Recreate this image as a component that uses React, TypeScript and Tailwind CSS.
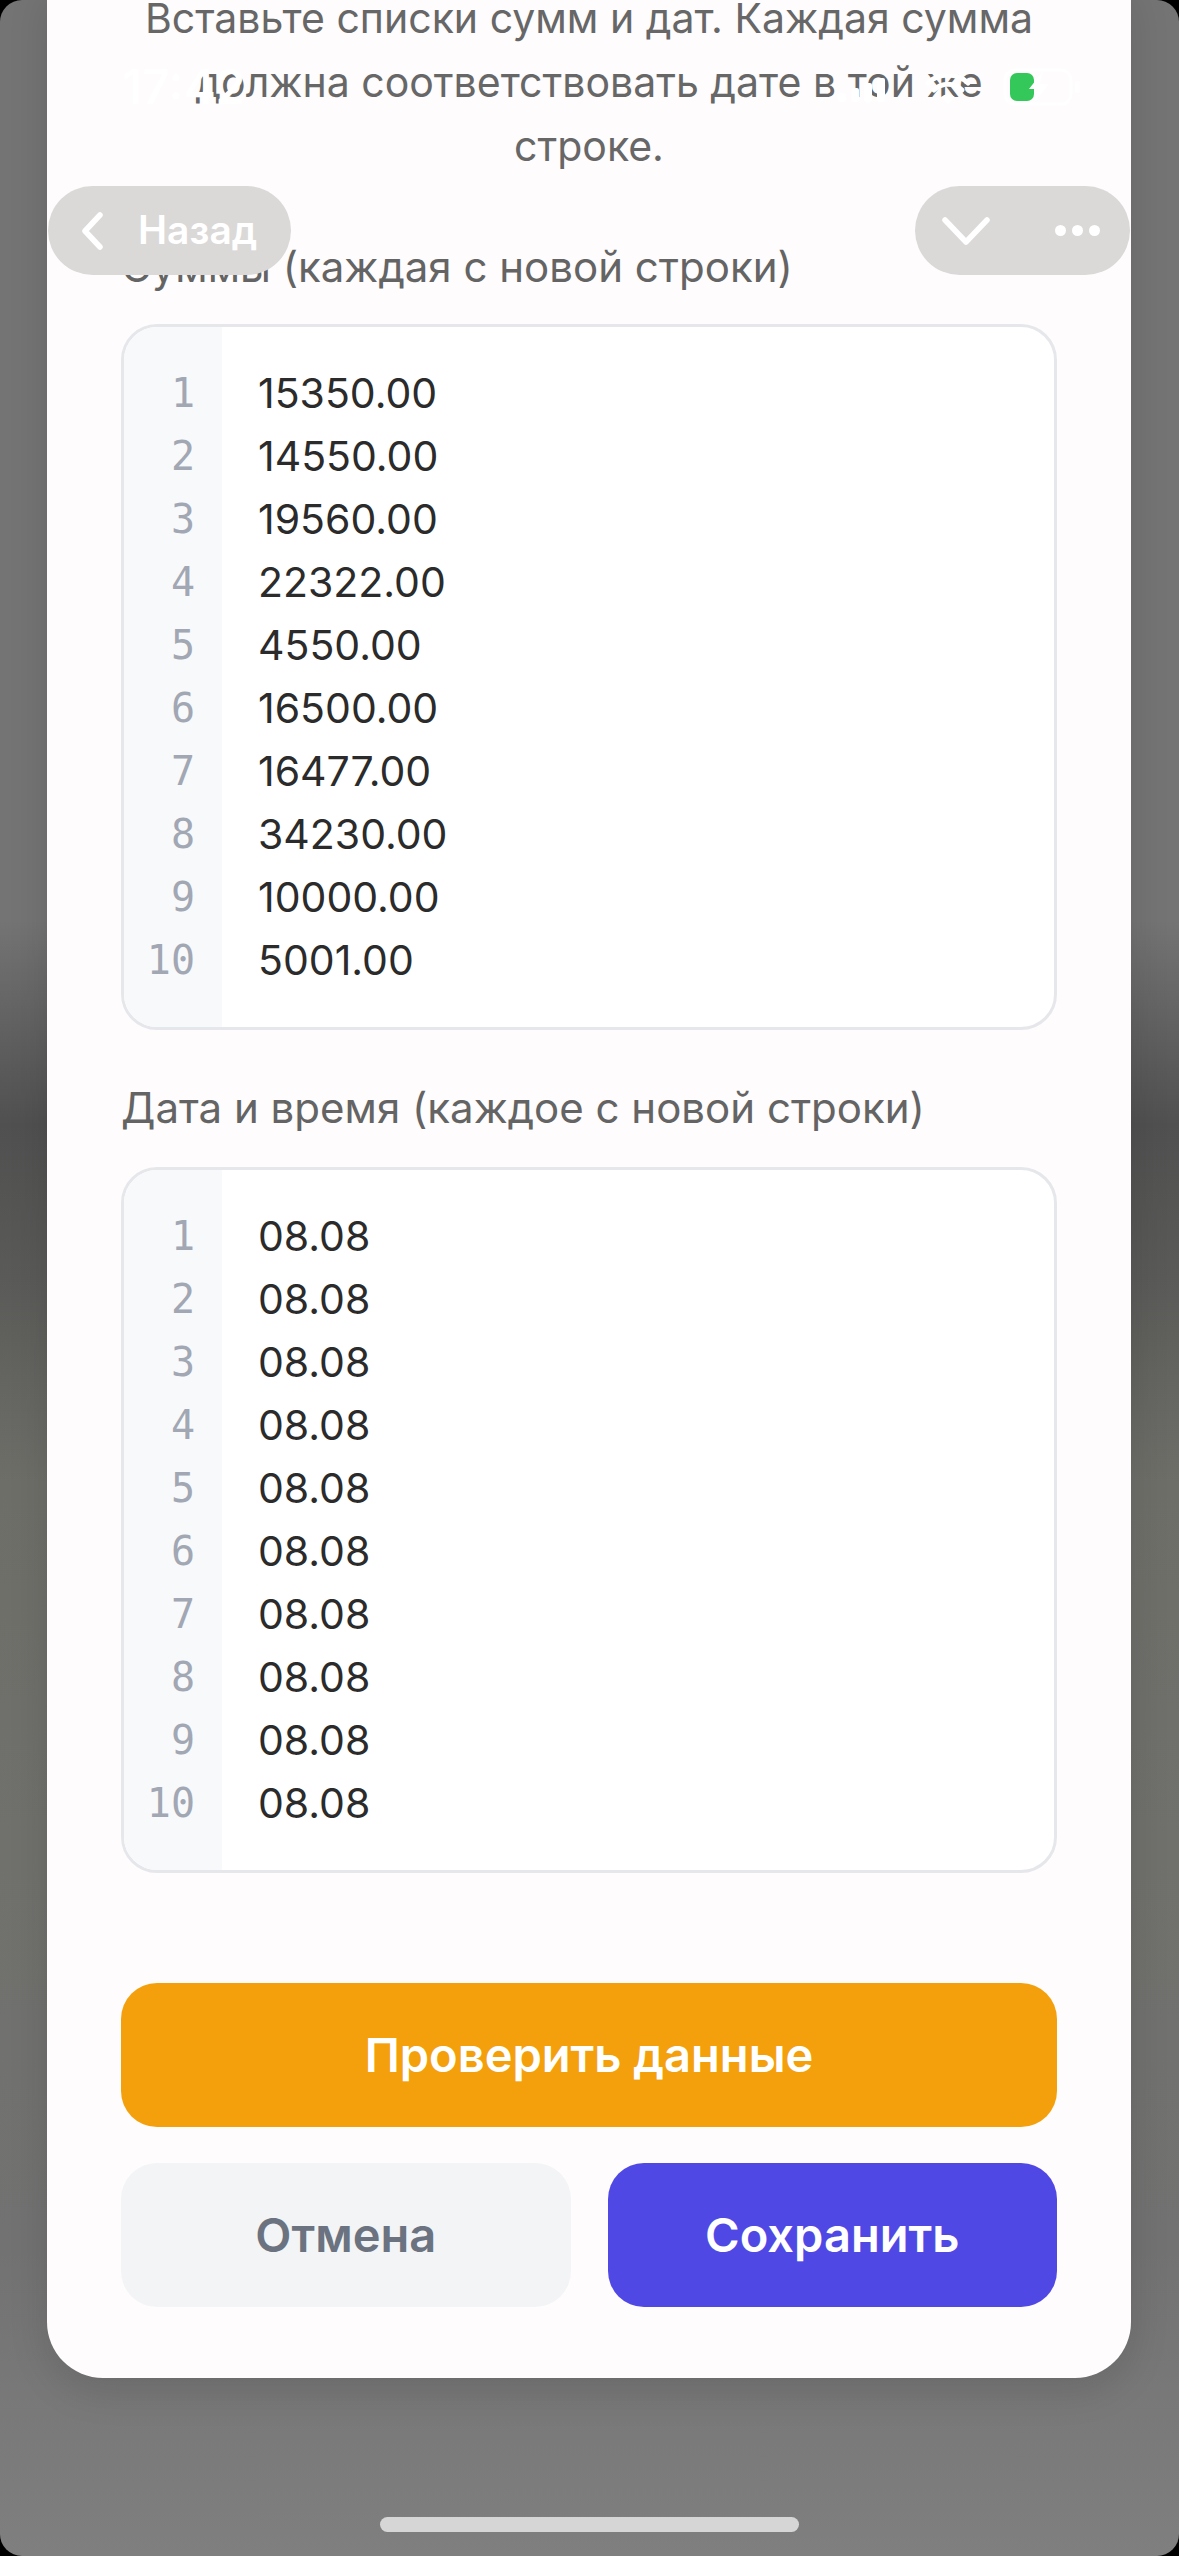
import React from "react";

const sums = [
  "15350.00",
  "14550.00",
  "19560.00",
  "22322.00",
  "4550.00",
  "16500.00",
  "16477.00",
  "34230.00",
  "10000.00",
  "5001.00",
];
const dates = Array.from({ length: 10 }, () => "08.08");

function Editor({ lines }: { lines: string[] }) {
  return (
    <div className="flex overflow-hidden rounded-[36px] border-[3px] border-[#e6e7eb] bg-white">
      <div className="w-[98px] shrink-0 bg-[#f8f9fb] py-[35px] pr-[27px] text-right font-['DejaVu_Sans_Mono',monospace] text-[40px] leading-[63px] text-[#a1a7b3]">
        {lines.map((_, i) => (
          <div key={i}>{i + 1}</div>
        ))}
      </div>
      <div className="flex-1 py-[35px] pl-[36px] text-[41px] leading-[63px] text-[#2b2b2b]">
        {lines.map((l, i) => (
          <div key={i}>{l}</div>
        ))}
      </div>
    </div>
  );
}

export default function App() {
  return (
    <div className="relative h-[2556px] w-[1179px] overflow-hidden bg-black font-['Inter','Noto_Sans',sans-serif]">
      <div className="h-full w-full overflow-hidden rounded-[22px] bg-[linear-gradient(to_bottom,#747474_0%,#747474_36%,#505050_44%,#5a5a58_50%,#6e6e69_58%,#70706c_72%,#727272_88%,#7f7f7f_100%)]">
        <div className="ml-[47px] w-[1084px] rounded-b-[56px] bg-[#fefcfd] px-[74px] pb-[71px] shadow-[0_12px_40px_rgba(0,0,0,0.12)]">
          <p className="-mt-[14px] text-center text-[41px] leading-[64px] text-[#676767]">
            Вставьте списки сумм и дат. Каждая сумма
            <br />
            должна соответствовать дате в той же
            <br />
            строке.
          </p>
          <div className="mb-[33px] mt-[65px] text-[42px] leading-[48px] text-[#646464]">
            Суммы (каждая с новой строки)
          </div>
          <Editor lines={sums} />
          <div className="mb-[35px] mt-[54px] text-[42px] leading-[48px] text-[#646464]">
            Дата и время (каждое с новой строки)
          </div>
          <Editor lines={dates} />
          <button className="mt-[110px] flex h-[144px] w-full items-center justify-center rounded-[36px] bg-[#f4a00c] text-[47px] font-semibold text-white">
            Проверить данные
          </button>
          <div className="mt-[36px] grid grid-cols-2 gap-[37px]">
            <button className="flex h-[144px] items-center justify-center rounded-[36px] bg-[#f3f4f6] text-[47px] font-semibold text-[#6b7280]">
              Отмена
            </button>
            <button className="flex h-[144px] items-center justify-center rounded-[36px] bg-[#5048e5] text-[47px] font-semibold text-white">
              Сохранить
            </button>
          </div>
        </div>
      </div>

      {/* status bar */}
      <div className="absolute left-[122px] top-[63px] text-[48px] font-semibold leading-none text-white">
        17:42
      </div>
      <div className="absolute left-[838px] top-[78px] flex items-end gap-[5px]">
        <div className="h-[9px] w-[8px] rounded-[2px] bg-white" />
        <div className="h-[14px] w-[8px] rounded-[2px] bg-white" />
        <div className="h-[19px] w-[8px] rounded-[2px] bg-white" />
        <div className="h-[24px] w-[8px] rounded-[2px] bg-white" />
      </div>
      <svg className="absolute left-[925px] top-[74px]" width="46" height="32" viewBox="0 0 46 32">
        <path d="M23 30 L16 23 A10 10 0 0 1 30 23 Z" fill="white" />
        <path d="M9 16 A20 20 0 0 1 37 16" stroke="white" strokeWidth="5" fill="none" strokeLinecap="round" />
        <path d="M3 9 A29 29 0 0 1 43 9" stroke="white" strokeWidth="5" fill="none" strokeLinecap="round" />
      </svg>
      <svg className="absolute left-[1003px] top-[68px]" width="80" height="38" viewBox="0 0 80 38">
        <rect x="2" y="2" width="66" height="34" rx="10" fill="none" stroke="white" strokeWidth="3" />
        <rect x="72" y="13" width="5" height="12" rx="2" fill="white" />
        <rect x="7" y="5" width="24" height="28" rx="7" fill="#34c759" />
        <path d="M40 3 L26 21 L35 21 L31 35 L46 16 L37 16 Z" fill="white" />
      </svg>

      {/* nav pills */}
      <div className="absolute left-[48px] top-[186px] flex h-[89px] w-[243px] items-center rounded-full bg-[#dbd8d8] pl-[32px]">
        <svg width="24" height="38" viewBox="0 0 24 38">
          <path d="M20 3 L5 19 L20 35" stroke="white" strokeWidth="5.5" fill="none" strokeLinecap="round" strokeLinejoin="round" />
        </svg>
        <span className="ml-[34px] text-[39px] font-semibold text-white">Назад</span>
      </div>
      <div className="absolute left-[915px] top-[186px] flex h-[89px] w-[215px] items-center rounded-full bg-[#dbd8d8] pl-[27px]">
        <svg width="48" height="30" viewBox="0 0 48 30">
          <path d="M3 4 L24 26 L45 4" stroke="white" strokeWidth="5.5" fill="none" strokeLinecap="round" strokeLinejoin="round" />
        </svg>
        <div className="ml-[65px] flex gap-[6px]">
          <div className="h-[11px] w-[11px] rounded-full bg-white" />
          <div className="h-[11px] w-[11px] rounded-full bg-white" />
          <div className="h-[11px] w-[11px] rounded-full bg-white" />
        </div>
      </div>

      {/* home indicator */}
      <div className="absolute left-[380px] top-[2517px] h-[15px] w-[419px] rounded-full bg-[#d6d6d6]" />
    </div>
  );
}
